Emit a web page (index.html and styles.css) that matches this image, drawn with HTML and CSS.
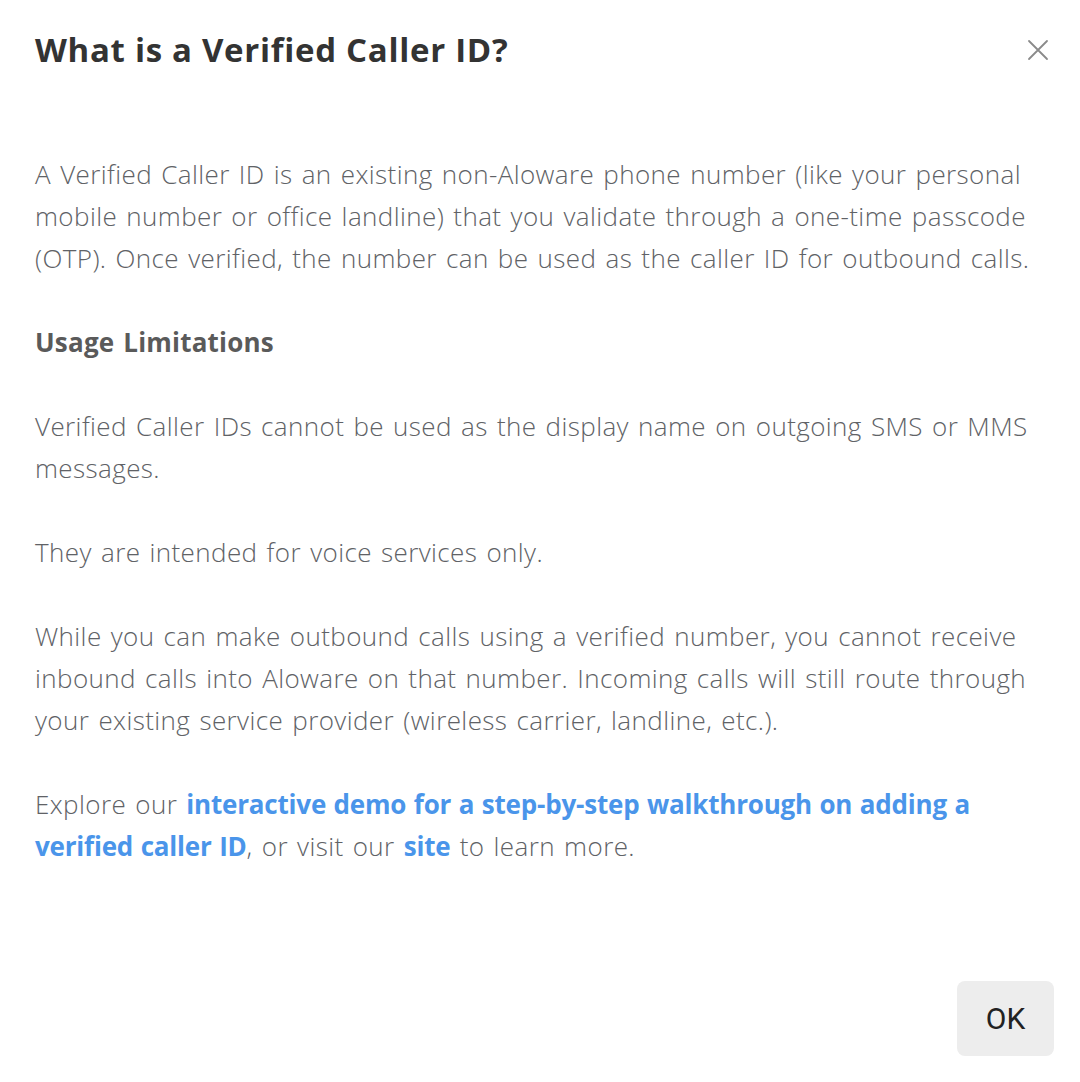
FILE: index.html
```html
<!DOCTYPE html>
<html lang="en">
<head>
  <meta charset="UTF-8" />
  <title>Verified Caller ID</title>
  <link rel="stylesheet" href="styles.css">
</head>
<body>
  <div class="dialog">
    <div class="dialog-header">
      <h2 class="dialog-title">What is a Verified Caller ID?</h2>
      <button class="close-btn" aria-label="Close">
        <svg width="22" height="22" viewBox="0 0 22 22"><path d="M2 2L20 20M20 2L2 20" stroke="#8a8a8a" stroke-width="1.8" stroke-linecap="round"/></svg>
      </button>
    </div>

    <div class="dialog-body">
      <p>A Verified Caller ID is an existing non-Aloware phone number (like your personal mobile number or office landline) that you validate through a one-time passcode (OTP). Once verified, the number can be used as the caller ID for outbound calls.</p>
      <p class="subhead">Usage Limitations</p>
      <p>Verified Caller IDs cannot be used as the display name on outgoing SMS or MMS messages.</p>
      <p>They are intended for voice services only.</p>
      <p>While you can make outbound calls using a verified number, you cannot receive inbound calls into Aloware on that number. Incoming calls will still route through your existing service provider (wireless carrier, landline, etc.).</p>
      <p>Explore our <a href="#">interactive demo for a step-by-step walkthrough on adding a verified caller ID</a>, or visit our <a href="#">site</a> to learn more.</p>
    </div>

    <div class="dialog-footer">
      <button class="ok-btn">OK</button>
    </div>
  </div>
</body>
</html>
```

FILE: styles.css
```css
body {
  margin: 0;
  background: #fff;
  font-family: "Open Sans", Lato, sans-serif;
}
.dialog {
  width: 1080px;
  height: 1082px;
  box-sizing: border-box;
  padding: 0 26px 26px 35px;
  display: flex;
  flex-direction: column;
}
.dialog-header {
  display: flex;
  justify-content: space-between;
  align-items: flex-start;
  padding-top: 28px;
  padding-right: 5px;
}
.dialog-title {
  margin: 0;
  font-size: 33px;
  line-height: 44px;
  font-weight: 700;
  letter-spacing: 0.7px;
  color: #333;
}
.close-btn {
  background: none;
  border: 0;
  padding: 0;
  margin-top: 11px;
  cursor: pointer;
}
.dialog-body {
  padding-top: 81px;
  padding-right: 9px;
  color: #606266;
  font-size: 26px;
  line-height: 42px;
  font-weight: 300;
  letter-spacing: 0.4px;
  word-spacing: 2px;
}
.dialog-body p {
  margin: 0 0 42px;
}
.subhead {
  font-weight: 700;
  color: #5a5a5a;
  letter-spacing: 0.2px;
}
.dialog-body a {
  color: #4a95ea;
  font-weight: 700;
  letter-spacing: -0.2px;
  word-spacing: 1px;
  text-decoration: none;
}
.dialog-footer {
  margin-top: auto;
  display: flex;
  justify-content: flex-end;
}
.ok-btn {
  width: 97px;
  height: 75px;
  border: 0;
  border-radius: 8px;
  background: #ededed;
  color: #222;
  font-family: Roboto, sans-serif;
  font-size: 30px;
  cursor: pointer;
}
```
